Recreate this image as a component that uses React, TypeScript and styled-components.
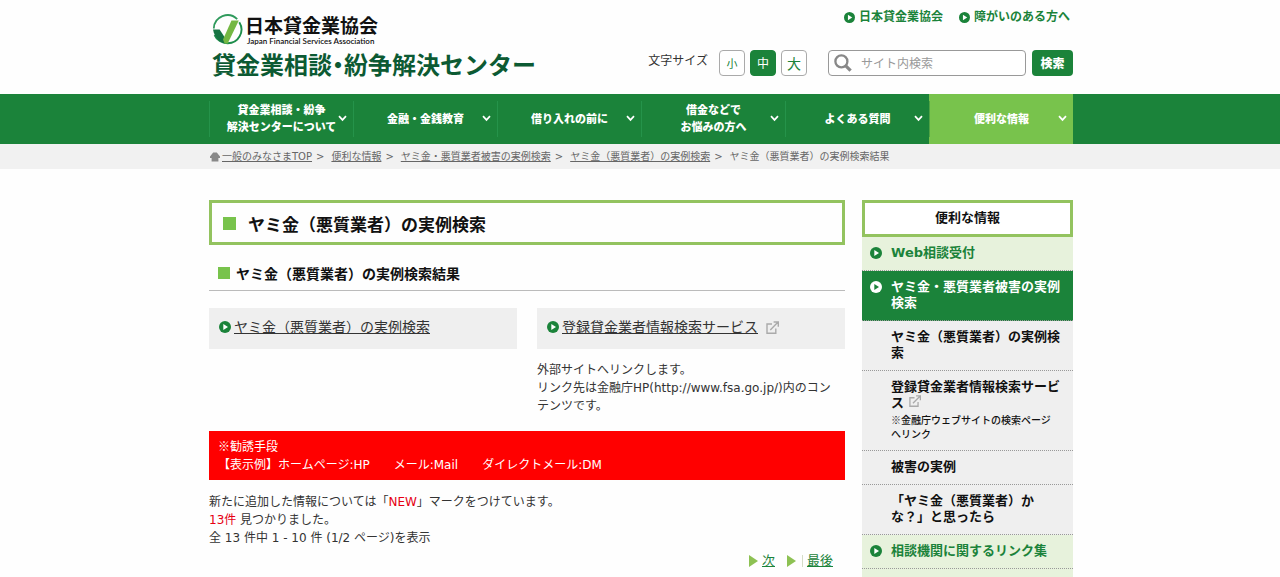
import React from "react";
import styled, { createGlobalStyle, css } from "styled-components";

const green = "#1b833a";
const lime = "#78c34c";
const limeBorder = "#93c35f";
const jpStack = `"Noto Sans CJK JP", sans-serif`;

const Global = createGlobalStyle`
  * { box-sizing: border-box; }
  body {
    margin: 0;
    background: #fefefe;
    color: #333;
    font-family: "DejaVu Sans", ${jpStack};
    font-size: 12px;
    line-height: 18px;
  }
  h1, h2, h3, p, ul, ol { margin: 0; padding: 0; }
  ul, ol { list-style: none; }
  a { color: inherit; }
`;

const Shell = styled.div`
  max-width: 866px;
  margin: 0 auto;
  padding-left: 2px;
`;

/* ---------- header ---------- */
const HeaderInner = styled(Shell)`
  display: flex;
  justify-content: space-between;
  height: 94px;
`;

const Brand = styled.a`
  display: block;
  padding: 14px 0 0 3px;
  color: #0c5a33;
  text-decoration: none;
  white-space: nowrap;
  font-family: ${jpStack};
`;

const BrandTop = styled.span`
  display: flex;
  gap: 2px;
  height: 32px;
  color: #111;
`;

const BrandNames = styled.span`
  display: flex;
  flex-direction: column;
`;

const BrandJa = styled.span`
  font-size: 19px;
  line-height: 22px;
  font-weight: 700;
`;

const BrandEn = styled.span`
  padding-left: 2px;
  font: 600 8px/10px Lato, sans-serif;
`;

const CenterName = styled.span`
  display: block;
  padding-top: 4px;
  font-size: 24px;
  line-height: 28px;
  font-weight: 700;
`;

const HalfWidth = styled.span`
  font-feature-settings: "halt";
`;

const Tools = styled.div`
  display: flex;
  flex-direction: column;
  align-items: flex-end;
  padding-top: 8px;
`;

const TopLinks = styled.ul`
  display: flex;
  gap: 16px;
  padding-right: 3px;
`;

const TopLink = styled.a`
  display: flex;
  align-items: center;
  gap: 4px;
  color: ${green};
  font-weight: 700;
  text-decoration: none;
`;

const ToolRow = styled.div`
  display: flex;
  align-items: center;
  padding-top: 24px;
`;

const SizeGroup = styled.div`
  display: flex;
  gap: 5px;
  align-items: center;
  padding-right: 21px;
`;

const SizeLabel = styled.span`
  padding: 0 6px 4px 0;
`;

const SizeButton = styled.button<{ $size: number; $on?: boolean }>`
  width: 26px;
  height: 26px;
  padding: 0;
  border: 1px solid ${(p) => (p.$on ? green : "#aaa")};
  border-radius: 4px;
  background: ${(p) => (p.$on ? green : "#fff")};
  color: ${(p) => (p.$on ? "#fff" : green)};
  font: ${(p) => p.$size}px/22px ${jpStack};
`;

const SearchForm = styled.form`
  display: flex;
  gap: 6px;
`;

const SearchBox = styled.label`
  display: flex;
  align-items: center;
  gap: 9px;
  width: 198px;
  height: 26px;
  padding-left: 5px;
  border: 1px solid #999;
  border-radius: 4px;
  background: #fff;
`;

const SearchInput = styled.input`
  flex: 1;
  min-width: 0;
  padding: 0;
  border: 0;
  outline: 0;
  background: transparent;
  font: 12px/18px ${jpStack};
  &::placeholder { color: #999; opacity: 1; }
`;

const SearchButton = styled.button`
  width: 41px;
  height: 26px;
  padding: 0;
  border: 0;
  border-radius: 4px;
  background: ${green};
  color: #fff;
  font: 900 12px/18px ${jpStack};
`;

/* ---------- global navigation ---------- */
const NavBar = styled.nav`
  background: ${green};
`;

const NavList = styled.ul`
  display: grid;
  grid-template-columns: repeat(6, 1fr);
`;

const NavItem = styled.li<{ $on?: boolean }>`
  display: flex;
  align-items: center;
  height: 50px;
  background: ${(p) => (p.$on ? lime : "none")};
`;

const NavLink = styled.a<{ $on?: boolean }>`
  flex: 1;
  display: grid;
  grid-template-columns: 15px 1fr 15px;
  align-items: center;
  height: 36px;
  padding-bottom: 2px;
  border-left: 1px solid ${(p) => (p.$on ? "#4fa344" : "#25934a")};
  color: #fff;
  font: 900 11px/17px ${jpStack};
  text-align: center;
  text-decoration: none;
  white-space: nowrap;
`;

const NavText = styled.span`
  grid-column: 2;
`;

/* ---------- breadcrumb ---------- */
const CrumbBar = styled.nav`
  background: #f1f1f1;
`;

const CrumbList = styled.ol`
  display: flex;
  align-items: center;
  height: 25px;
  padding-left: 1px;
  color: #666;
  font-size: 10px;
  white-space: nowrap;
`;

const Crumb = styled.li`
  display: flex;
  align-items: center;
  gap: 2px;
  & + &::before { content: ">"; padding: 0 5px 0 4px; }
`;

/* ---------- page body ---------- */
const Columns = styled(Shell)`
  display: flex;
  align-items: flex-start;
  gap: 17px;
  padding-top: 31px;
`;

const Main = styled.main`
  flex: 1;
  min-width: 0;
`;

const headingSquare = css`
  display: flex;
  align-items: center;
  color: #111;
  font-family: ${jpStack};
  font-weight: 700;
  &::before { content: ""; background: ${lime}; }
`;

const PageTitle = styled.h1`
  ${headingSquare}
  gap: 12px;
  height: 45px;
  padding: 2px 11px 0;
  border: 3px solid ${limeBorder};
  font-size: 17px;
  &::before { width: 13px; height: 13px; }
`;

const SectionTitle = styled.h2`
  ${headingSquare}
  gap: 6px;
  margin-top: 11px;
  height: 35px;
  padding-left: 9px;
  border-bottom: 1px solid #bbb;
  font-size: 14px;
  &::before { width: 12px; height: 12px; }
`;

const LinkGrid = styled.div`
  display: grid;
  grid-template-columns: 1fr 1fr;
  gap: 20px;
  margin-top: 17px;
`;

const LinkBox = styled.div`
  display: flex;
  align-items: center;
  gap: 3px;
  height: 41px;
  padding: 0 10px 3px;
  background: #efefef;
  font-size: 14px;
`;

const ExternalMark = styled.span`
  display: inline-flex;
  margin-left: 5px;
`;

const LinkNote = styled.p`
  padding: 12px 8px 0 0;
`;

const Notice = styled.div`
  margin-top: 16px;
  padding: 6px 9px;
  background: #f00;
  color: #fff;
`;

const Ja = styled.span`
  font-family: ${jpStack};
`;

const Spaced = styled.span`
  margin-left: 24px;
`;

const Results = styled.div`
  padding-top: 13px;
`;

const Red = styled.span`
  color: #e60012;
`;

const Pager = styled.nav`
  display: flex;
  justify-content: flex-end;
  align-items: center;
  padding: 5px 12px 0 0;
  color: ${green};
  font-size: 13px;
`;

const PagerLink = styled.a`
  margin-left: 4px;
`;

const PagerArrow = styled.span`
  display: inline-flex;
  margin-left: 12px;
`;

const PagerBar = styled.span`
  height: 12px;
  margin-left: 6px;
  border-left: 1px solid #d5dcc8;
`;

/* ---------- sidebar ---------- */
const Side = styled.aside`
  width: 211px;
  padding-bottom: 8px;
  background: #e7f2dc;
  color: #111;
  font-weight: 700;
  font-size: 13px;
  line-height: 16px;
`;

const SideTitle = styled.h2`
  height: 37px;
  border: 3px solid ${limeBorder};
  background: #fff;
  font: 700 13px/27px ${jpStack};
  text-align: center;
`;

const SideItem = styled.li<{ $kind: "light" | "active" | "sub" }>`
  border-bottom: 1px dotted #999;
  background: ${(p) => ({ light: "#e7f2dc", active: green, sub: "#efefef" })[p.$kind]};
  color: ${(p) => ({ light: green, active: "#fff", sub: "#111" })[p.$kind]};
`;

const SideLink = styled.a`
  display: grid;
  grid-template-columns: 12px 1fr;
  column-gap: 9px;
  padding: 8px 8px 9px;
  text-decoration: none;
`;

const SideIcon = styled.span`
  display: flex;
  align-items: center;
  height: 16px;
`;

const SideText = styled.span`
  grid-column: 2;
`;

const SideNote = styled.small`
  display: block;
  padding: 2px 12px 0 0;
  font: 500 10px/14px ${jpStack};
`;

/* ---------- drawings ---------- */
const PlayDot = ({ size = 12, fill = green, mark = "#fff" }) => (
  <svg width={size} height={size} viewBox="0 0 12 12" aria-hidden="true">
    <circle cx="6" cy="6" r="6" fill={fill} />
    <path d="M4.3 3.1 9 6 4.3 8.9Z" fill={mark} />
  </svg>
);

const Chevron = () => (
  <svg width="9" height="7" viewBox="0 0 9 7" fill="none" stroke="#fff" strokeWidth="1.7" aria-hidden="true">
    <path d="M1 1.2 4.5 4.9 8 1.2" />
  </svg>
);

const External = ({ size = 13 }) => (
  <svg width={size} height={size} viewBox="0 0 13 13" fill="none" stroke="#aaa" strokeWidth="1.4" aria-hidden="true">
    <path d="M6 3H1v9.2h8.8V7.5M4.3 9 11.6 1.6M7.6 1h4.7v4.7" />
  </svg>
);

const HomeMark = () => (
  <svg width="10" height="10" viewBox="0 0 10 10" fill="#888" aria-hidden="true">
    <path d="M3.2 0.6H6.8L10 4.6V6H8.4V9.4H1.6V6H0V4.6Z" />
  </svg>
);

const Triangle = () => (
  <svg width="9" height="12" viewBox="0 0 9 12" fill="#8dc153" aria-hidden="true">
    <path d="M0 0 9 6 0 12Z" />
  </svg>
);

const Magnifier = () => (
  <svg width="18" height="18" viewBox="0 0 18 18" fill="none" stroke="#888" aria-hidden="true">
    <circle cx="7.4" cy="7.4" r="6" strokeWidth="2.3" />
    <path d="m11.8 11.8 4.8 4.8" strokeWidth="3.2" />
  </svg>
);

const Emblem = () => (
  <svg width="31" height="31" viewBox="0 0 31 31" fill="none" aria-hidden="true">
    <path d="M25.2 5.2A13.7 13.7 0 0 0 1.8 14.5" stroke="#2f9a5c" strokeWidth="1.8" />
    <path d="M27.3 8.2A13.7 13.7 0 0 1 15.5 29.2C10 29.2 4.8 26 2.6 21" stroke="#1d8d4b" strokeWidth="1.9" />
    <path d="M1 15.5H7.6L14.8 26.5 13 29.5C7 28 2.5 23 1 15.5Z" fill="#167443" />
    <path d="M19.5 6.4H26.8L15.7 29.6H12.6L11 25.4Z" fill="#74b843" />
  </svg>
);

/* ---------- data ---------- */
const navItems = [
  ["貸金業相談・紛争", "解決センターについて"],
  ["金融・金銭教育"],
  ["借り入れの前に"],
  ["借金などで", "お悩みの方へ"],
  ["よくある質問"],
  ["便利な情報"],
];

const crumbs = ["一般のみなさまTOP", "便利な情報", "ヤミ金・悪質業者被害の実例検索", "ヤミ金（悪質業者）の実例検索"];

type SideEntry = { kind: "light" | "active" | "sub"; label: string; external?: boolean; note?: string };

const sideItems: SideEntry[] = [
  { kind: "light", label: "Web相談受付" },
  { kind: "active", label: "ヤミ金・悪質業者被害の実例検索" },
  { kind: "sub", label: "ヤミ金（悪質業者）の実例検索" },
  { kind: "sub", label: "登録貸金業者情報検索サービス", external: true, note: "※金融庁ウェブサイトの検索ページへリンク" },
  { kind: "sub", label: "被害の実例" },
  { kind: "sub", label: "「ヤミ金（悪質業者）かな？」と思ったら" },
  { kind: "light", label: "相談機関に関するリンク集" },
];

export default function App() {
  return (
    <>
      <Global />
      <header>
        <HeaderInner>
          <Brand href="#">
            <BrandTop>
              <Emblem />
              <BrandNames>
                <BrandJa>日本貸金業協会</BrandJa>
                <BrandEn>Japan Financial Services Association</BrandEn>
              </BrandNames>
            </BrandTop>
            <CenterName>
              貸金業相談<HalfWidth>・</HalfWidth>紛争解決センター
            </CenterName>
          </Brand>
          <Tools>
            <TopLinks>
              {["日本貸金業協会", "障がいのある方へ"].map((label) => (
                <li key={label}>
                  <TopLink href="#">
                    <PlayDot size={11} />
                    {label}
                  </TopLink>
                </li>
              ))}
            </TopLinks>
            <ToolRow>
              <SizeGroup role="group" aria-labelledby="size-label">
                <SizeLabel id="size-label">文字サイズ</SizeLabel>
                <SizeButton type="button" $size={11}>小</SizeButton>
                <SizeButton type="button" $size={12} $on>中</SizeButton>
                <SizeButton type="button" $size={14}>大</SizeButton>
              </SizeGroup>
              <SearchForm onSubmit={(e) => e.preventDefault()}>
                <SearchBox>
                  <Magnifier />
                  <SearchInput type="text" placeholder="サイト内検索" aria-label="サイト内検索" />
                </SearchBox>
                <SearchButton type="submit">検索</SearchButton>
              </SearchForm>
            </ToolRow>
          </Tools>
        </HeaderInner>
      </header>

      <NavBar>
        <Shell>
          <NavList>
            {navItems.map((lines, i) => {
              const on = i === navItems.length - 1;
              return (
                <NavItem key={lines[0]} $on={on}>
                  <NavLink href="#" $on={on}>
                    <NavText>
                      {lines.map((line, n) => (
                        <React.Fragment key={line}>
                          {n > 0 && <br />}
                          {line}
                        </React.Fragment>
                      ))}
                    </NavText>
                    <Chevron />
                  </NavLink>
                </NavItem>
              );
            })}
          </NavList>
        </Shell>
      </NavBar>

      <CrumbBar>
        <Shell>
          <CrumbList>
            {crumbs.map((label, i) => (
              <Crumb key={label}>
                {i === 0 && <HomeMark />}
                <a href="#">{label}</a>
              </Crumb>
            ))}
            <Crumb>ヤミ金（悪質業者）の実例検索結果</Crumb>
          </CrumbList>
        </Shell>
      </CrumbBar>

      <Columns>
        <Main>
          <PageTitle>ヤミ金（悪質業者）の実例検索</PageTitle>
          <SectionTitle>ヤミ金（悪質業者）の実例検索結果</SectionTitle>
          <LinkGrid>
            <div>
              <LinkBox>
                <PlayDot />
                <a href="#">ヤミ金（悪質業者）の実例検索</a>
              </LinkBox>
            </div>
            <div>
              <LinkBox>
                <PlayDot />
                <a href="#">登録貸金業者情報検索サービス</a>
                <ExternalMark><External /></ExternalMark>
              </LinkBox>
              <LinkNote>
                外部サイトへリンクします。
                <br />
                リンク先は金融庁HP(http://www.fsa.go.jp/)内のコンテンツです。
              </LinkNote>
            </div>
          </LinkGrid>
          <Notice>
            <p><Ja>※勧誘手段</Ja></p>
            <p>
              【表示例】ホームページ:HP<Spaced>メール:Mail</Spaced>
              <Spaced>ダイレクトメール:DM</Spaced>
            </p>
          </Notice>
          <Results>
            <p>新たに追加した情報については「<Red>NEW</Red>」マークをつけています。</p>
            <p><Red>13件</Red> 見つかりました。</p>
            <p>全 13 件中 1 - 10 件 (1/2 ページ)を表示</p>
          </Results>
          <Pager>
            <Triangle />
            <PagerLink href="#">次</PagerLink>
            <PagerArrow><Triangle /></PagerArrow>
            <PagerBar />
            <PagerLink href="#">最後</PagerLink>
          </Pager>
        </Main>

        <Side>
          <SideTitle>便利な情報</SideTitle>
          <ul>
            {sideItems.map((item) => (
              <SideItem key={item.label} $kind={item.kind}>
                <SideLink href="#">
                  {item.kind !== "sub" && (
                    <SideIcon>
                      {item.kind === "active" ? <PlayDot fill="#fff" mark={green} /> : <PlayDot />}
                    </SideIcon>
                  )}
                  <SideText>
                    {item.label}
                    {item.external && <ExternalMark><External size={12} /></ExternalMark>}
                    {item.note && <SideNote>{item.note}</SideNote>}
                  </SideText>
                </SideLink>
              </SideItem>
            ))}
          </ul>
        </Side>
      </Columns>
    </>
  );
}
